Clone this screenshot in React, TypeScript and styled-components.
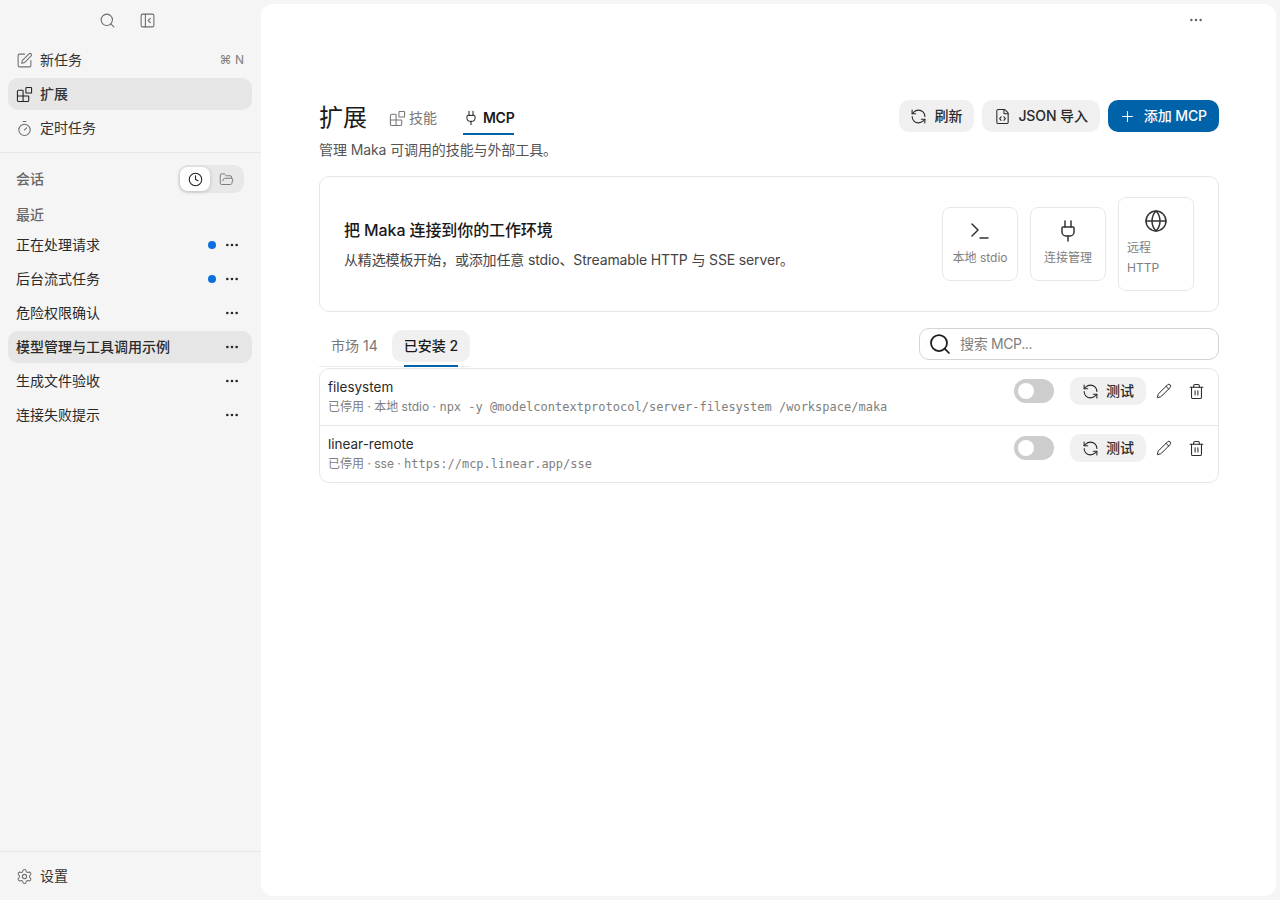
import styled, { createGlobalStyle } from "styled-components";
import {
  Blocks,
  Clock,
  Ellipsis,
  FileCode,
  FolderOpen,
  Globe,
  PanelLeftClose,
  Pencil,
  Plug,
  Plus,
  RefreshCcw,
  Search,
  Settings,
  SquarePen,
  Terminal,
  Timer,
  Trash2,
} from "lucide-react";

const GlobalStyle = createGlobalStyle`
  html, body {
    margin: 0;
    padding: 0;
    height: 100%;
    overflow: hidden;
    background: #f5f5f5;
    color: #1a1a1a;
    font-family: Inter, "Noto Sans CJK SC", sans-serif;
    line-height: 20px;
  }
  * { box-sizing: border-box; }
`;

const Shell = styled.div`
  display: flex;
  height: 900px;
  padding: 4px 4px 4px 0;
`;

const Sidebar = styled.aside`
  width: 261px;
  margin: -4px 0;
  display: flex;
  flex-direction: column;
  flex-shrink: 0;
`;

const TopIcons = styled.div`
  height: 40px;
  display: flex;
  justify-content: center;
  align-items: center;
  gap: 23px;
  color: #6b6b6b;
  padding-right: 6px;
`;

const NavList = styled.nav`
  display: flex;
  flex-direction: column;
  gap: 2px;
  padding: 4px 9px 8px 8px;
`;

const NavItem = styled.div<{ $active?: boolean }>`
  height: 32px;
  display: flex;
  align-items: center;
  gap: 7.5px;
  padding: 0 8px 0 7.5px;
  border-radius: 10px;
  font-size: 14px;
  font-weight: ${p => (p.$active ? 500 : 400)};
  color: #333;
  background: ${p => (p.$active ? "#e6e6e6" : "transparent")};
  svg { color: ${p => (p.$active ? "#222" : "#6f6f6f")}; }
`;

const Shortcut = styled.span`
  margin-left: auto;
  font-size: 12px;
  color: #808080;
`;

const Divider = styled.div`
  height: 1px;
  background: #e8e8e8;
`;

const SectionHead = styled.div`
  height: 52px;
  padding: 0 17px 0 16px;
  display: flex;
  align-items: center;
  justify-content: space-between;
  font-size: 14px;
  font-weight: 500;
  color: #666;
`;

const ViewSwitch = styled.div`
  width: 66px;
  height: 28px;
  padding: 2px;
  border-radius: 10px;
  background: #e8e8e8;
  display: flex;
`;

const ViewButton = styled.div<{ $active?: boolean }>`
  flex: ${p => (p.$active ? "0 0 30px" : 1)};
  display: flex;
  align-items: center;
  justify-content: center;
  border-radius: 8px;
  color: ${p => (p.$active ? "#222" : "#777")};
  background: ${p => (p.$active ? "#fff" : "transparent")};
  box-shadow: ${p => (p.$active ? "0 1px 4px rgba(0,0,0,.18)" : "none")};
`;

const GroupLabel = styled.div`
  padding: 0 16px;
  height: 20px;
  margin-bottom: 4px;
  font-size: 14px;
  font-weight: 500;
  color: #666;
`;

const SessionList = styled.div`
  display: flex;
  flex-direction: column;
  gap: 2px;
  padding: 0 9px 0 8px;
`;

const SessionRow = styled.div<{ $active?: boolean }>`
  height: 32px;
  padding: 0 12px 0 8px;
  display: flex;
  align-items: center;
  border-radius: 10px;
  font-size: 14px;
  font-weight: ${p => (p.$active ? 500 : 400)};
  color: #2a2a2a;
  background: ${p => (p.$active ? "#e6e6e6" : "transparent")};
`;

const SessionName = styled.span`
  flex: 1;
`;

const BusyDot = styled.span`
  width: 8px;
  height: 8px;
  border-radius: 50%;
  background: #0a6fe0;
  margin-right: 8px;
`;

const SidebarFooter = styled.div`
  margin-top: auto;
  height: 49px;
  border-top: 1px solid #e8e8e8;
  display: flex;
  align-items: center;
  gap: 7.5px;
  padding: 0 15.5px;
  font-size: 14px;
  color: #333;
  svg { color: #6f6f6f; }
`;

const Main = styled.main`
  flex: 1;
  position: relative;
  background: #fff;
  border-radius: 12px;
  padding: 96px 57px 0 58px;
`;

const TopMenu = styled.div`
  position: absolute;
  top: 8px;
  right: 72px;
  display: flex;
  color: #666;
`;

const PageHead = styled.header`
  display: flex;
  justify-content: space-between;
  align-items: flex-start;
`;

const TitleRow = styled.div`
  display: flex;
  align-items: flex-start;
  height: 36px;
`;

const Title = styled.h1`
  margin: 0 22px 0 0;
  font-size: 24px;
  font-weight: 400;
  line-height: 36px;
  color: #1a1a1a;
`;

const HeadTab = styled.div<{ $active?: boolean }>`
  height: 35px;
  padding-top: 3px;
  display: flex;
  align-items: center;
  gap: 4px;
  margin-right: 26px;
  font-size: 14px;
  font-weight: ${p => (p.$active ? 600 : 400)};
  letter-spacing: ${p => (p.$active ? "-0.3px" : "0")};
  color: ${p => (p.$active ? "#1a1a1a" : "#777")};
  border-bottom: 2px solid ${p => (p.$active ? "#0062a8" : "transparent")};
`;

const TabBlocks = styled(Blocks)`
  margin: 0 -0.5px;
`;

const Subtitle = styled.p`
  margin: 4px 0 0;
  font-size: 14px;
  letter-spacing: -0.1px;
  color: #555;
`;

const Actions = styled.div`
  display: flex;
  gap: 8px;
`;

const Button = styled.button<{ $primary?: boolean }>`
  height: 32px;
  padding: 0 12px 0 11.5px;
  border: 0;
  border-radius: 10px;
  display: inline-flex;
  align-items: center;
  gap: 7.5px;
  font: 450 14px/20px Inter, "Noto Sans CJK SC", sans-serif;
  letter-spacing: -0.1px;
  color: ${p => (p.$primary ? "#fff" : "#2a2a2a")};
  background: ${p => (p.$primary ? "#0062a8" : "#f0f0f0")};
`;

const Hero = styled.section`
  margin-top: 16px;
  height: 136px;
  border: 1px solid #e6e6e6;
  border-radius: 10px;
  padding: 0 24px;
  display: flex;
  align-items: center;
  justify-content: space-between;
`;

const HeroTitle = styled.div`
  font-size: 16px;
  font-weight: 500;
  line-height: 24px;
  letter-spacing: -0.1px;
  color: #1a1a1a;
`;

const HeroText = styled.div`
  margin-top: 8px;
  font-size: 14px;
  letter-spacing: -0.14px;
  color: #444;
`;

const FeatureRow = styled.div`
  display: flex;
  align-items: center;
  gap: 12px;
`;

const Feature = styled.div<{ $wrap?: boolean }>`
  width: 76px;
  border: 1px solid #e8e8e8;
  border-radius: 8px;
  padding: 11px 8px 12px;
  display: flex;
  flex-direction: column;
  align-items: ${p => (p.$wrap ? "flex-start" : "center")};
  gap: 5px;
  font-size: 12px;
  color: #808080;
  svg { color: #333; align-self: center; }
`;

const ListBar = styled.div`
  margin-top: 16px;
  display: flex;
  justify-content: space-between;
  align-items: flex-start;
`;

const Segments = styled.div`
  margin-top: 2px;
  padding-bottom: 4px;
  display: flex;
  gap: 2px;
  border-bottom: 1px solid #ededed;
`;

const Segment = styled.div<{ $active?: boolean }>`
  position: relative;
  height: 32px;
  padding: 0 12px;
  display: flex;
  align-items: center;
  border-radius: 10px;
  font-size: 14px;
  font-weight: ${p => (p.$active ? 500 : 400)};
  color: ${p => (p.$active ? "#1a1a1a" : "#777")};
  background: ${p => (p.$active ? "#f0f0f0" : "transparent")};
  ${p =>
    p.$active &&
    `&::after {
      content: "";
      position: absolute;
      left: 12px;
      right: 12px;
      bottom: -5px;
      height: 2px;
      background: #0062a8;
    }`}
`;

const SearchBox = styled.div`
  width: 300px;
  height: 32px;
  border: 1px solid #d4d4d4;
  border-radius: 10px;
  padding: 0 8px;
  display: flex;
  align-items: center;
  gap: 8px;
  font-size: 14px;
  letter-spacing: -0.35px;
  color: #808080;
  svg { color: #1a1a1a; }
`;

const ServerList = styled.div`
  margin-top: 1px;
  border: 1px solid #e6e6e6;
  border-radius: 10px;
`;

const ServerRow = styled.div`
  box-sizing: content-box;
  height: 48px;
  padding: 8px 8px 0 8px;
  display: flex;
  justify-content: space-between;
  & + & { border-top: 1px solid #e6e6e6; }
`;

const ServerName = styled.div`
  font-size: 13.5px;
  color: #2a2a2a;
`;

const ServerMeta = styled.div`
  margin-top: 2px;
  font-size: 12px;
  line-height: 16px;
  color: #808080;
  code { font: 12px "DejaVu Sans Mono", monospace; }
`;

const RowActions = styled.div`
  display: flex;
  align-items: center;
  align-self: flex-start;
  height: 28px;
  gap: 4px;
`;

const Toggle = styled.div`
  width: 40px;
  height: 24px;
  margin-right: 12px;
  padding: 4px;
  border-radius: 12px;
  background: #cdcdcd;
  &::before {
    content: "";
    display: block;
    width: 16px;
    height: 16px;
    border-radius: 50%;
    background: #fff;
  }
`;

const TestButton = styled(Button)`
  height: 28px;
  width: 76px;
`;

const IconButton = styled.div`
  width: 28px;
  height: 28px;
  display: flex;
  align-items: center;
  justify-content: center;
  color: #2a2a2a;
`;

const sessions = [
  { name: "正在处理请求", busy: true },
  { name: "后台流式任务", busy: true },
  { name: "危险权限确认" },
  { name: "模型管理与工具调用示例", active: true },
  { name: "生成文件验收" },
  { name: "连接失败提示" },
];

const servers = [
  {
    name: "filesystem",
    kind: "本地 stdio",
    target: "npx -y @modelcontextprotocol/server-filesystem /workspace/maka",
  },
  { name: "linear-remote", kind: "sse", target: "https://mcp.linear.app/sse" },
];

const App = () => {
  return (
    <Shell>
      <GlobalStyle />
      <Sidebar>
        <TopIcons>
          <Search size={17} strokeWidth={1.5} />
          <PanelLeftClose size={17} strokeWidth={1.5} />
        </TopIcons>
        <NavList>
          <NavItem>
            <SquarePen size={17} strokeWidth={1.5} />
            新任务
            <Shortcut>⌘ N</Shortcut>
          </NavItem>
          <NavItem $active>
            <Blocks size={17} strokeWidth={1.5} />
            扩展
          </NavItem>
          <NavItem>
            <Timer size={17} strokeWidth={1.5} />
            定时任务
          </NavItem>
        </NavList>
        <Divider />
        <SectionHead>
          会话
          <ViewSwitch>
            <ViewButton $active>
              <Clock size={15} strokeWidth={1.75} />
            </ViewButton>
            <ViewButton>
              <FolderOpen size={15} strokeWidth={1.5} />
            </ViewButton>
          </ViewSwitch>
        </SectionHead>
        <GroupLabel>最近</GroupLabel>
        <SessionList>
          {sessions.map(item => (
            <SessionRow key={item.name} $active={item.active}>
              <SessionName>{item.name}</SessionName>
              {item.busy && <BusyDot />}
              <Ellipsis size={16} strokeWidth={2} />
            </SessionRow>
          ))}
        </SessionList>
        <SidebarFooter>
          <Settings size={17} strokeWidth={1.5} />
          设置
        </SidebarFooter>
      </Sidebar>
      <Main>
        <TopMenu>
          <Ellipsis size={16} strokeWidth={1.75} />
        </TopMenu>
        <PageHead>
          <div>
            <TitleRow>
              <Title>扩展</Title>
              <HeadTab>
                <TabBlocks size={17} strokeWidth={1.5} />
                技能
              </HeadTab>
              <HeadTab $active>
                <Plug size={16} strokeWidth={1.5} />
                MCP
              </HeadTab>
            </TitleRow>
            <Subtitle>管理 Maka 可调用的技能与外部工具。</Subtitle>
          </div>
          <Actions>
            <Button>
              <RefreshCcw size={17} strokeWidth={1.5} />
              刷新
            </Button>
            <Button>
              <FileCode size={17} strokeWidth={1.5} />
              JSON 导入
            </Button>
            <Button $primary>
              <Plus size={17} strokeWidth={1.5} />
              添加 MCP
            </Button>
          </Actions>
        </PageHead>
        <Hero>
          <div>
            <HeroTitle>把 Maka 连接到你的工作环境</HeroTitle>
            <HeroText>从精选模板开始，或添加任意 stdio、Streamable HTTP 与 SSE server。</HeroText>
          </div>
          <FeatureRow>
            <Feature>
              <Terminal size={24} strokeWidth={1.5} />
              本地 stdio
            </Feature>
            <Feature>
              <Plug size={24} strokeWidth={1.5} />
              连接管理
            </Feature>
            <Feature $wrap>
              <Globe size={24} strokeWidth={1.5} />
              <span>远程 HTTP</span>
            </Feature>
          </FeatureRow>
        </Hero>
        <ListBar>
          <Segments>
            <Segment>市场 14</Segment>
            <Segment $active>已安装 2</Segment>
          </Segments>
          <SearchBox>
            <Search size={24} strokeWidth={1.75} />
            搜索 MCP...
          </SearchBox>
        </ListBar>
        <ServerList>
          {servers.map(server => (
            <ServerRow key={server.name}>
              <div>
                <ServerName>{server.name}</ServerName>
                <ServerMeta>
                  已停用 · {server.kind} · <code>{server.target}</code>
                </ServerMeta>
              </div>
              <RowActions>
                <Toggle />
                <TestButton>
                  <RefreshCcw size={17} strokeWidth={1.5} />
                  测试
                </TestButton>
                <IconButton>
                  <Pencil size={16} strokeWidth={1.5} />
                </IconButton>
                <IconButton>
                  <Trash2 size={17} strokeWidth={1.5} />
                </IconButton>
              </RowActions>
            </ServerRow>
          ))}
        </ServerList>
      </Main>
    </Shell>
  );
};

export default App;
